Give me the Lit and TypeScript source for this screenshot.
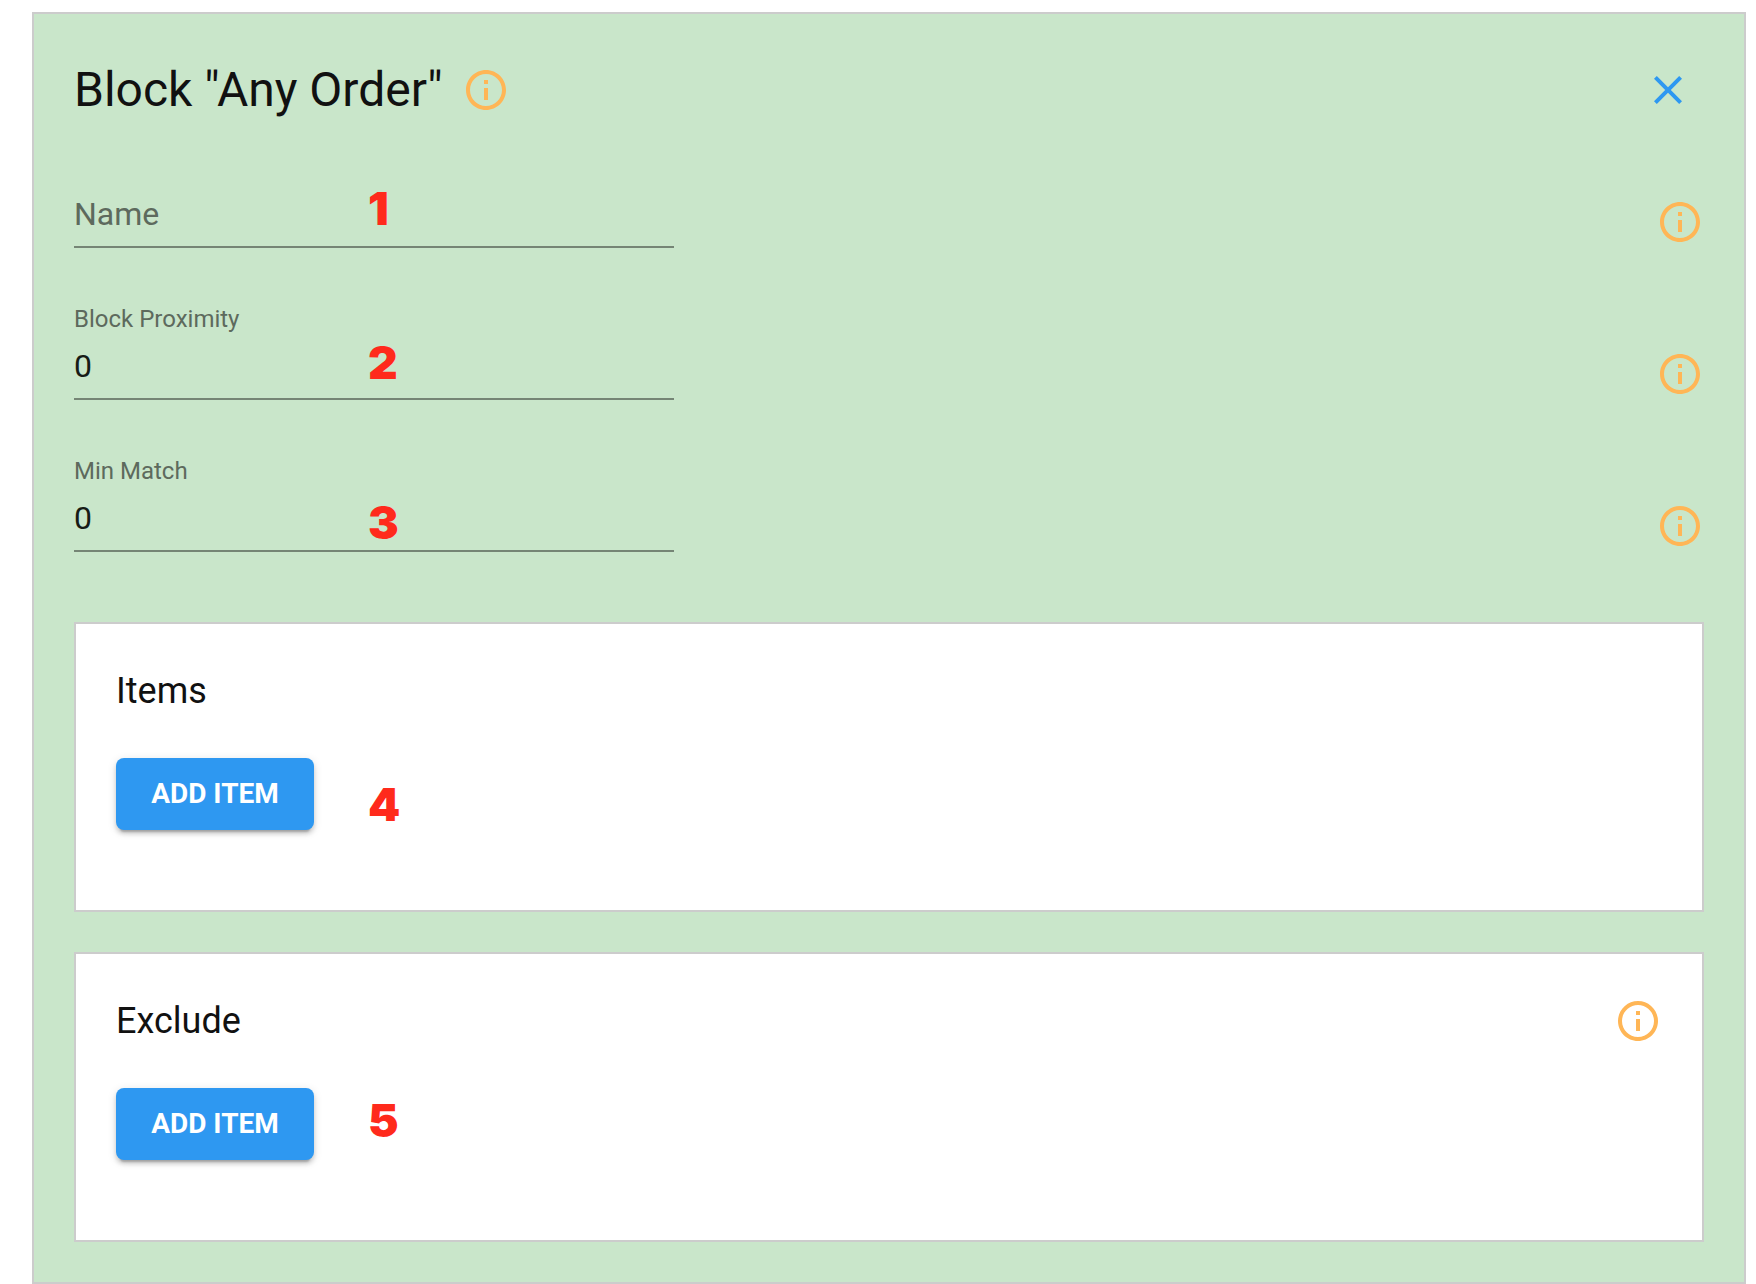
import { LitElement, html, css } from "lit";
import { customElement, property, state } from "lit/decorators.js";
import { classMap } from "lit/directives/class-map.js";
import { styleMap } from "lit/directives/style-map.js";

interface Field {
  id: string;
  label: string;
  value: string;
}

interface Mark {
  text: string;
  top: number;
}

const FIELDS: Field[] = [
  { id: "name", label: "Name", value: "" },
  { id: "proximity", label: "Block Proximity", value: "0" },
  { id: "min-match", label: "Min Match", value: "0" },
];

// Numbered callouts that float over the form, measured from the block's top.
const MARKS: Mark[] = [
  { text: "1", top: 166 },
  { text: "2", top: 320 },
  { text: "3", top: 480 },
  { text: "4", top: 762 },
  { text: "5", top: 1078 },
];

@customElement("info-button")
class InfoButton extends LitElement {
  @property() topic = "";

  static styles = css`
    :host {
      display: block;
      flex: none;
    }
    .info {
      display: block;
      padding: 0;
      border: 0;
      background: none;
      color: #ffb656;
      cursor: pointer;
    }
    .icon {
      display: block;
      width: 48px;
      height: 48px;
      fill: currentColor;
    }
  `;

  render() {
    return html`<button class="info" type="button" aria-label=${"About " + this.topic}>
      <svg class="icon" viewBox="0 0 24 24" aria-hidden="true">
        <path
          d="M11 7h2v2h-2zm0 4h2v6h-2zm1-9C6.48 2 2 6.48 2 12s4.480 10 10 10 10-4.480 10-10S17.520 2 12 2zm0 18c-4.410 0-8-3.590-8-8s3.590-8 8-8 8 3.590 8 8-3.590 8-8 8z"
        ></path>
      </svg>
    </button>`;
  }
}

@customElement("text-field")
class TextField extends LitElement {
  @property() label = "";
  @property() value = "";

  static styles = css`
    :host {
      display: block;
      flex: 0 1 600px;
    }
    .field {
      display: grid;
      grid-template-rows: 32px 64px;
    }
    .label {
      grid-area: 1 / 1;
      color: #5d6a5d;
      font-size: 24px;
      line-height: 30px;
    }
    .label.resting {
      grid-area: 2 / 1;
      z-index: 1;
      font-size: 32px;
      line-height: 60px;
      pointer-events: none;
    }
    .input {
      grid-area: 2 / 1;
      box-sizing: border-box;
      width: 100%;
      min-width: 0;
      margin: 0;
      padding: 0 0 2px;
      border: 0;
      border-bottom: 2px solid #758575;
      border-radius: 0;
      outline: 0;
      background: transparent;
      color: #161c16;
      font: inherit;
      font-size: 32px;
    }
  `;

  private onInput(event: Event) {
    this.value = (event.target as HTMLInputElement).value;
  }

  render() {
    return html`<div class="field">
      <label class=${classMap({ label: true, resting: this.value === "" })} for="input">${this.label}</label>
      <input class="input" id="input" type="text" .value=${this.value} @input=${this.onInput} />
    </div>`;
  }
}

@customElement("app-root")
class AppRoot extends LitElement {
  @state() private fields = FIELDS;

  static styles = css`
    :host {
      display: block;
      padding: 12px 10px 0 32px;
      background: #fff;
      color: #111;
      font-family: Roboto, "Liberation Sans", sans-serif;
    }
    .block {
      position: relative;
      display: flex;
      flex-direction: column;
      padding: 40px;
      border: 2px solid #ccc;
      background: #c9e6ca;
    }
    .header {
      display: flex;
      align-items: center;
      gap: 19px;
      margin-bottom: 26px;
    }
    .title {
      margin: 0;
      font-size: 48px;
      font-weight: 400;
      line-height: 72px;
    }
    .close {
      margin-left: auto;
      padding: 12px;
      border: 0;
      background: none;
      color: #2e98f1;
      cursor: pointer;
    }
    .close-icon {
      display: block;
      width: 48px;
      height: 48px;
      fill: currentColor;
    }
    .fields {
      display: flex;
      flex-direction: column;
      gap: 56px;
      margin-bottom: 70px;
    }
    .row {
      display: flex;
      align-items: flex-end;
      justify-content: space-between;
    }
    .row-info {
      margin-bottom: 2px;
    }
    .cards {
      display: flex;
      flex-direction: column;
      gap: 40px;
    }
    .card {
      display: flex;
      flex-direction: column;
      align-items: stretch;
      gap: 40px;
      padding: 40px 40px 80px;
      border: 2px solid #ccc;
      background: #fff;
    }
    .card-head {
      display: flex;
      align-items: center;
      justify-content: space-between;
    }
    .card-title {
      margin: 0;
      font-size: 36px;
      font-weight: 400;
      line-height: 54px;
    }
    .add {
      align-self: flex-start;
      min-width: 198px;
      padding: 0 32px;
      border: 0;
      border-radius: 8px;
      background: #2e98f1;
      box-shadow:
        0 6px 2px -4px rgba(0, 0, 0, 0.2),
        0 4px 4px 0 rgba(0, 0, 0, 0.14),
        0 2px 10px 0 rgba(0, 0, 0, 0.12);
      color: #fff;
      font: inherit;
      font-size: 28px;
      font-weight: 700;
      line-height: 72px;
      text-transform: uppercase;
      cursor: pointer;
    }
    .mark {
      position: absolute;
      left: 334px;
      color: #ff2a1c;
      font-family: Inter, "Liberation Sans", sans-serif;
      font-size: 46px;
      font-weight: 900;
      line-height: 56px;
      pointer-events: none;
    }
  `;

  private card(title: string, info: boolean) {
    return html`<section class="card">
      <div class="card-head">
        <h2 class="card-title">${title}</h2>
        ${info ? html`<info-button topic=${title}></info-button>` : null}
      </div>
      <button class="add" type="button">Add item</button>
    </section>`;
  }

  render() {
    return html`<main class="block">
      <header class="header">
        <h1 class="title">Block "Any Order"</h1>
        <info-button topic="Any Order"></info-button>
        <button class="close" type="button" aria-label="Close">
          <svg class="close-icon" viewBox="0 0 24 24" aria-hidden="true">
            <path
              d="M19 6.41L17.590 5 12 10.590 6.410 5 5 6.410 10.590 12 5 17.590 6.410 19 12 13.410 17.590 19 19 17.590 13.410 12z"
            ></path>
          </svg>
        </button>
      </header>
      <form class="fields">
        ${this.fields.map(
          (field) => html`<div class="row">
            <text-field label=${field.label} value=${field.value}></text-field>
            <info-button class="row-info" topic=${field.label}></info-button>
          </div>`,
        )}
      </form>
      <div class="cards">${this.card("Items", false)} ${this.card("Exclude", true)}</div>
      ${MARKS.map((mark) => html`<span class="mark" style=${styleMap({ top: mark.top + "px" })}>${mark.text}</span>`)}
    </main>`;
  }
}
